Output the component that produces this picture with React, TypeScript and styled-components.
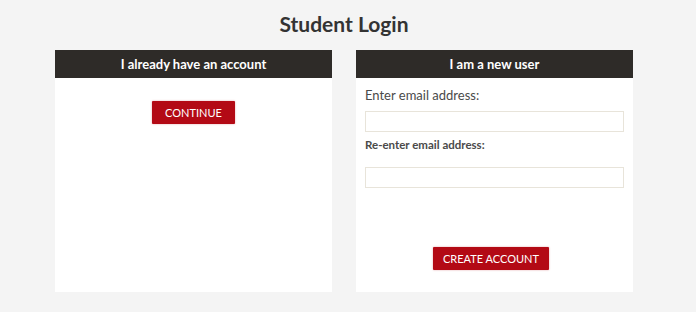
import * as React from "react"
import styled, { createGlobalStyle } from "styled-components"

const GlobalStyle = createGlobalStyle`
  html, body {
    margin: 0;
    padding: 0;
    background: #f4f4f4;
    font-family: Lato, "Liberation Sans", sans-serif;
  }
  * {
    box-sizing: border-box;
  }
`

const Page = styled.div`
  width: 696px;
  height: 312px;
  display: flex;
  flex-direction: column;
  align-items: center;
  padding-right: 8px;
`

const Title = styled.h1`
  margin: 10px 0 0;
  height: 40px;
  line-height: 28px;
  font-size: 21px;
  font-weight: 700;
  color: #333;
`

const Row = styled.div`
  display: flex;
  gap: 24px;
`

const Card = styled.section`
  width: 277px;
  height: 242px;
  background: #fff;
  display: flex;
  flex-direction: column;
`

const CardHeader = styled.div`
  height: 28px;
  background: #2e2b28;
  color: #fff;
  font-size: 13px;
  font-weight: 700;
  display: flex;
  align-items: center;
  justify-content: center;
`

const CardBody = styled.div<{ $padded?: boolean }>`
  flex: 1;
  display: flex;
  flex-direction: column;
  align-items: ${(p) => (p.$padded ? "stretch" : "center")};
  padding: ${(p) => (p.$padded ? "9px 9px 22px" : "23px 0 0")};
`

const Label = styled.label<{ $small?: boolean }>`
  display: block;
  color: #4a4a4a;
  font-size: ${(p) => (p.$small ? "11.5px" : "13px")};
  font-weight: ${(p) => (p.$small ? 700 : 400)};
  line-height: 16px;
  margin-bottom: ${(p) => (p.$small ? "14px" : "8px")};
`

const Input = styled.input`
  display: block;
  width: 100%;
  height: 21px;
  border: 1px solid #e8e4da;
  background: #fff;
  margin: 0 0 5px;
  padding: 0 6px;
  outline: none;
`

const Button = styled.button<{ $wide?: boolean }>`
  width: ${(p) => (p.$wide ? "116px" : "83px")};
  height: 23px;
  border: none;
  border-radius: 1px;
  background: #b30a15;
  color: #fff;
  font-family: Lato, "Liberation Sans", sans-serif;
  font-size: 11px;
  text-transform: uppercase;
  box-shadow: 0 0 2px rgba(179, 10, 21, 0.4);
  cursor: pointer;
  align-self: center;
  margin-top: ${(p) => (p.$wide ? "auto" : "0")};
  margin-right: ${(p) => (p.$wide ? "7px" : "0")};
`

export default function App() {
  return (
    <>
      <GlobalStyle />
      <Page>
        <Title>Student Login</Title>
        <Row>
          <Card>
            <CardHeader>I already have an account</CardHeader>
            <CardBody>
              <Button>Continue</Button>
            </CardBody>
          </Card>
          <Card>
            <CardHeader>I am a new user</CardHeader>
            <CardBody $padded>
              <Label>Enter email address:</Label>
              <Input type="email" />
              <Label $small>Re-enter email address:</Label>
              <Input type="email" />
              <Button $wide>Create account</Button>
            </CardBody>
          </Card>
        </Row>
      </Page>
    </>
  )
}
